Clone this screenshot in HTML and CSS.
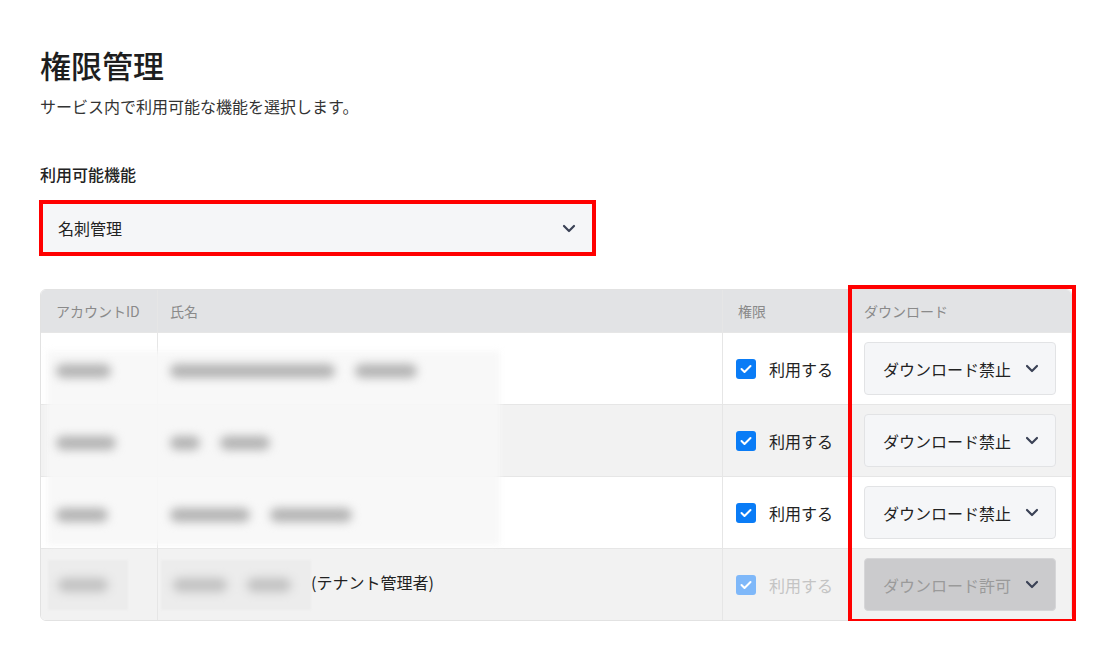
FILE: index.html
```html
<!DOCTYPE html>
<html lang="ja">
<head>
    <meta charset="UTF-8">
    <title>権限管理</title>
    <link rel="stylesheet" href="styles.css">
</head>
<body>
<div class="page">
    <h1 class="title">権限管理</h1>
    <p class="lead">サービス内で利用可能な機能を選択します。</p>

    <div class="field">
        <div class="field-label">利用可能機能</div>
        <div class="select select-main">
            <span>名刺管理</span>
            <svg class="chev" width="14" height="9" viewBox="0 0 14 9"><path d="M2 2l5 5 5-5" fill="none" stroke="#3b4256" stroke-width="2.2" stroke-linecap="round" stroke-linejoin="round"/></svg>
        </div>
    </div>

    <div class="table-wrap">
        <div class="mask"></div>
        <table class="acl">
            <thead>
            <tr>
                <th class="c-id">アカウントID</th>
                <th class="c-name">氏名</th>
                <th class="c-perm">権限</th>
                <th class="c-dl">ダウンロード</th>
            </tr>
            </thead>
            <tbody>
            <tr>
                <td><span class="blob" style="width:55px"></span></td>
                <td><span class="blob" style="width:165px"></span><span class="blob" style="width:62px"></span></td>
                <td><label class="check"><span class="box"><svg width="12" height="10" viewBox="0 0 12 10"><path d="M1.5 5l3 3 6-6" fill="none" stroke="#fff" stroke-width="2" stroke-linecap="round" stroke-linejoin="round"/></svg></span>利用する</label></td>
                <td><div class="select select-dl"><span>ダウンロード禁止</span><svg class="chev" width="14" height="9" viewBox="0 0 14 9"><path d="M2 2l5 5 5-5" fill="none" stroke="#3b4256" stroke-width="2.2" stroke-linecap="round" stroke-linejoin="round"/></svg></div></td>
            </tr>
            <tr>
                <td><span class="blob" style="width:60px"></span></td>
                <td><span class="blob" style="width:30px"></span><span class="blob" style="width:50px"></span></td>
                <td><label class="check"><span class="box"><svg width="12" height="10" viewBox="0 0 12 10"><path d="M1.5 5l3 3 6-6" fill="none" stroke="#fff" stroke-width="2" stroke-linecap="round" stroke-linejoin="round"/></svg></span>利用する</label></td>
                <td><div class="select select-dl"><span>ダウンロード禁止</span><svg class="chev" width="14" height="9" viewBox="0 0 14 9"><path d="M2 2l5 5 5-5" fill="none" stroke="#3b4256" stroke-width="2.2" stroke-linecap="round" stroke-linejoin="round"/></svg></div></td>
            </tr>
            <tr>
                <td><span class="blob" style="width:52px"></span></td>
                <td><span class="blob" style="width:80px"></span><span class="blob" style="width:82px"></span></td>
                <td><label class="check"><span class="box"><svg width="12" height="10" viewBox="0 0 12 10"><path d="M1.5 5l3 3 6-6" fill="none" stroke="#fff" stroke-width="2" stroke-linecap="round" stroke-linejoin="round"/></svg></span>利用する</label></td>
                <td><div class="select select-dl"><span>ダウンロード禁止</span><svg class="chev" width="14" height="9" viewBox="0 0 14 9"><path d="M2 2l5 5 5-5" fill="none" stroke="#3b4256" stroke-width="2.2" stroke-linecap="round" stroke-linejoin="round"/></svg></div></td>
            </tr>
            <tr class="disabled">
                <td><span class="patch patch-id"><span class="blob" style="width:52px"></span></span></td>
                <td><span class="patch patch-name"><span class="blob" style="width:60px"></span><span class="blob" style="width:48px"></span></span>(テナント管理者)</td>
                <td><label class="check"><span class="box"><svg width="12" height="10" viewBox="0 0 12 10"><path d="M1.5 5l3 3 6-6" fill="none" stroke="#fff" stroke-width="2" stroke-linecap="round" stroke-linejoin="round"/></svg></span>利用する</label></td>
                <td><div class="select select-dl"><span>ダウンロード許可</span><svg class="chev" width="14" height="9" viewBox="0 0 14 9"><path d="M2 2l5 5 5-5" fill="none" stroke="#3b4256" stroke-width="2.2" stroke-linecap="round" stroke-linejoin="round"/></svg></div></td>
            </tr>
            </tbody>
        </table>
        <div class="mark"></div>
    </div>
</div>
</body>
</html>
```

FILE: styles.css
```css
body {
    margin: 0;
    background: #fff;
    color: #222;
    font-family: "Noto Sans CJK JP", "Noto Sans", sans-serif;
}

.page {
    padding: 44px 38px 0 40px;
}

.title {
    margin: 0;
    font-size: 31px;
    line-height: 42px;
    font-weight: 500;
    color: #1e1e1e;
}

.lead {
    margin: 8px 0 0 0;
    font-size: 16px;
    line-height: 24px;
    color: #333;
}

.field {
    margin-top: 44px;
}

.field-label {
    font-size: 16px;
    line-height: 24px;
    font-weight: 500;
    color: #222;
}

.select {
    display: flex;
    align-items: center;
    justify-content: space-between;
    background: #f5f6f8;
    font-size: 16px;
    color: #222;
}

.select-main {
    width: 518px;
    height: 48px;
    margin: 18px 0 0 3px;
    padding: 0 16px 0 15px;
    outline: 4px solid #ff0000;
}

.table-wrap {
    position: relative;
    margin-top: 37px;
    width: 1032px;
}

.acl {
    width: 100%;
    border-collapse: separate;
    border-spacing: 0;
    border: 1px solid #e2e2e2;
    border-radius: 6px;
    overflow: hidden;
    table-layout: fixed;
}

.acl th {
    height: 42px;
    background: #e2e3e5;
    color: #8a8a8a;
    font-size: 14px;
    font-weight: 400;
    text-align: left;
    padding: 0 15px;
}

.acl td {
    height: 71px;
    padding: 0 15px;
    font-size: 16px;
    border-top: 1px solid #e6e6e6;
}

.acl th + th,
.acl td + td {
    border-left: 1px solid #e6e6e6;
}

.acl tbody tr:nth-child(even) td {
    background: #f2f2f2;
}

.c-id { width: 86px; }
.c-name { width: 537px; }
.c-perm { width: 95px; }

.acl td:nth-child(2) { padding-left: 12px; }
.acl th:nth-child(2) { padding-left: 12px; }

.blob {
    display: inline-block;
    position: relative;
    z-index: 2;
    height: 14px;
    margin-right: 20px;
    vertical-align: middle;
    background: #b4b4b4;
    border-radius: 7px;
    filter: blur(5px);
}

.mask {
    position: absolute;
    z-index: 1;
    left: 7px;
    top: 62px;
    width: 453px;
    height: 194px;
    background: rgba(247, 247, 247, 0.92);
    filter: blur(3px);
}

.patch {
    display: inline-flex;
    align-items: center;
    height: 50px;
    background: #ececec;
    filter: blur(1px);
    vertical-align: middle;
}

.patch-id {
    width: 70px;
    margin-left: -8px;
    padding-left: 10px;
}

.patch-name {
    width: 138px;
    margin-left: -9px;
    padding-left: 12px;
}

.patch .blob {
    background: #c2c2c2;
}

.check {
    display: flex;
    align-items: center;
    gap: 13px;
    font-size: 16px;
    color: #222;
    white-space: nowrap;
    margin-left: -2px;
}

.box {
    display: inline-flex;
    align-items: center;
    justify-content: center;
    width: 20px;
    height: 20px;
    border-radius: 3px;
    background: #0a7cf6;
}

.select-dl {
    height: 51px;
    margin-left: 0;
    padding: 0 16px 0 18px;
    border: 1px solid #e2e3e5;
    border-radius: 4px;
    white-space: nowrap;
}

.disabled .box {
    background: #7fb8f9;
}

.disabled .check {
    color: #c4c4c4;
}

.disabled .select-dl {
    background: #cbcbcd;
    border-color: #d6d6d8;
    color: #9a9a9a;
}

.mark {
    position: absolute;
    left: 808px;
    top: -4px;
    width: 220px;
    height: 330px;
    border: 4px solid #ff0000;
}
```
